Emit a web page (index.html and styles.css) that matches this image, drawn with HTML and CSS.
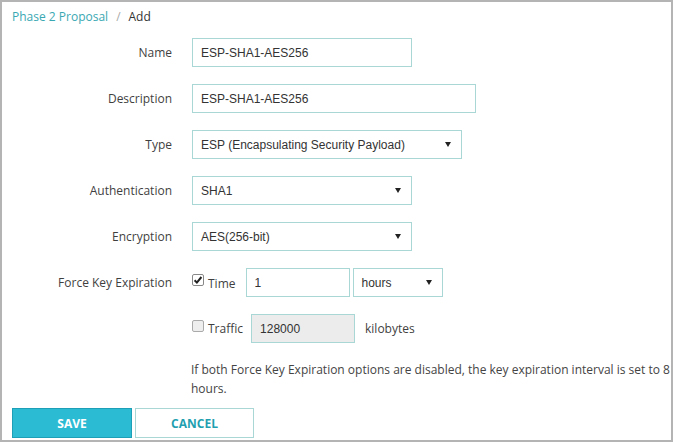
FILE: index.html
```html
<!DOCTYPE html>
<html>
<head>
<meta charset="utf-8">
<link rel="stylesheet" href="styles.css">
</head>
<body>
<div class="frame">
  <div class="crumbs"><a class="crumb-link">Phase 2 Proposal</a><span class="sep">/</span><span class="crumb-cur">Add</span></div>
  <div class="form">
    <div class="row">
      <label class="lbl">Name</label>
      <div class="ctl"><div class="input w220">ESP-SHA1-AES256</div></div>
    </div>
    <div class="row">
      <label class="lbl">Description</label>
      <div class="ctl"><div class="input w284">ESP-SHA1-AES256</div></div>
    </div>
    <div class="row">
      <label class="lbl">Type</label>
      <div class="ctl"><div class="input select w270"><span>ESP (Encapsulating Security Payload)</span><span class="arrow"></span></div></div>
    </div>
    <div class="row">
      <label class="lbl">Authentication</label>
      <div class="ctl"><div class="input select w220"><span>SHA1</span><span class="arrow"></span></div></div>
    </div>
    <div class="row">
      <label class="lbl">Encryption</label>
      <div class="ctl"><div class="input select w220"><span>AES(256-bit)</span><span class="arrow"></span></div></div>
    </div>
    <div class="row">
      <label class="lbl">Force Key Expiration</label>
      <div class="ctl">
        <span class="check checked"><svg viewBox="0 0 12 12" width="12" height="12"><rect x="0.5" y="0.5" width="11" height="11" rx="1.5" fill="#fff" stroke="#888"/><path d="M2.6 6.2 L4.9 8.6 L9.4 3" fill="none" stroke="#222" stroke-width="2"/></svg></span>
        <span class="opt opt-time">Time</span>
        <div class="input w104">1</div>
        <div class="input select w90 hours"><span>hours</span><span class="arrow"></span></div>
      </div>
    </div>
    <div class="row">
      <label class="lbl"></label>
      <div class="ctl">
        <span class="check"><svg viewBox="0 0 12 12" width="12" height="12"><rect x="0.5" y="0.5" width="11" height="11" rx="1.5" fill="#eeeeee" stroke="#aaa"/></svg></span>
        <span class="opt opt-traffic">Traffic</span>
        <div class="input w104 disabled">128000</div>
        <span class="unit">kilobytes</span>
      </div>
    </div>
    <div class="help">If both Force Key Expiration options are disabled, the key expiration interval is set to 8 hours.</div>
  </div>
  <div class="buttons">
    <button class="btn btn-save">SAVE</button>
    <button class="btn btn-cancel">CANCEL</button>
  </div>
</div>
</body>
</html>
```

FILE: styles.css
```css
html, body {
  margin: 0;
  padding: 0;
  background: #fff;
}
.frame {
  box-sizing: border-box;
  width: 673px;
  height: 442px;
  border: 2px solid #b4b4b4;
  font-family: "Open Sans", "Liberation Sans", sans-serif;
  color: #444;
  display: flex;
  flex-direction: column;
}
.crumbs {
  height: 36px;
  padding-left: 10px;
  padding-top: 6px;
  box-sizing: border-box;
  font-size: 12px;
  line-height: 18px;
}
.crumb-link { color: #3aa8b2; }
.sep { color: #aaa; margin: 0 8px; }
.crumb-cur { color: #333; }
.form {
  display: flex;
  flex-direction: column;
  gap: 17px;
}
.row {
  display: flex;
  align-items: center;
  height: 29px;
}
.lbl {
  width: 170px;
  text-align: right;
  font-size: 12px;
  color: #3f3f3f;
  flex: none;
}
.ctl {
  margin-left: 20px;
  display: flex;
  align-items: center;
  height: 29px;
}
.input {
  box-sizing: border-box;
  height: 29px;
  border: 1px solid #a9d7d6;
  font-family: "Liberation Sans", Arial, sans-serif;
  font-size: 12px;
  color: #333;
  padding-left: 8px;
  display: flex;
  align-items: center;
  background: #fff;
}
.select {
  justify-content: space-between;
  padding-right: 10px;
}
.arrow {
  width: 0;
  height: 0;
  border-left: 3px solid transparent;
  border-right: 3px solid transparent;
  border-top: 5px solid #222;
}
.w220 { width: 220px; }
.w284 { width: 284px; }
.w270 { width: 270px; }
.w104 { width: 104px; }
.w90 { width: 90px; }
.hours { margin-left: 3px; }
.check {
  display: flex;
  width: 12px;
  height: 12px;
  margin-top: -5px;
}
.opt {
  font-size: 12px;
  color: #3f3f3f;
  margin-left: 4px;
}
.opt-time { margin-right: 10px; margin-top: 2px; }
.opt-traffic { margin-right: 8px; }
.disabled { background: #ececec; }
.unit {
  margin-left: 10px;
  font-size: 12px;
  color: #3f3f3f;
}
.help {
  margin-left: 189px;
  font-size: 12px;
  line-height: 19px;
  color: #444;
}
.buttons {
  display: flex;
  gap: 3px;
  padding-left: 10px;
  margin-top: 10px;
}
.btn {
  box-sizing: border-box;
  height: 30px;
  width: 120px;
  font-family: "Open Sans", sans-serif;
  font-weight: 700;
  font-size: 12px;
  cursor: pointer;
}
.btn-save {
  background: #2bbbd3;
  border: 1px solid #1c9fb7;
  color: #fff;
}
.btn-cancel {
  width: 119px;
  background: #fff;
  border: 1px solid #a9d7d6;
  color: #1f9fb0;
}
```
